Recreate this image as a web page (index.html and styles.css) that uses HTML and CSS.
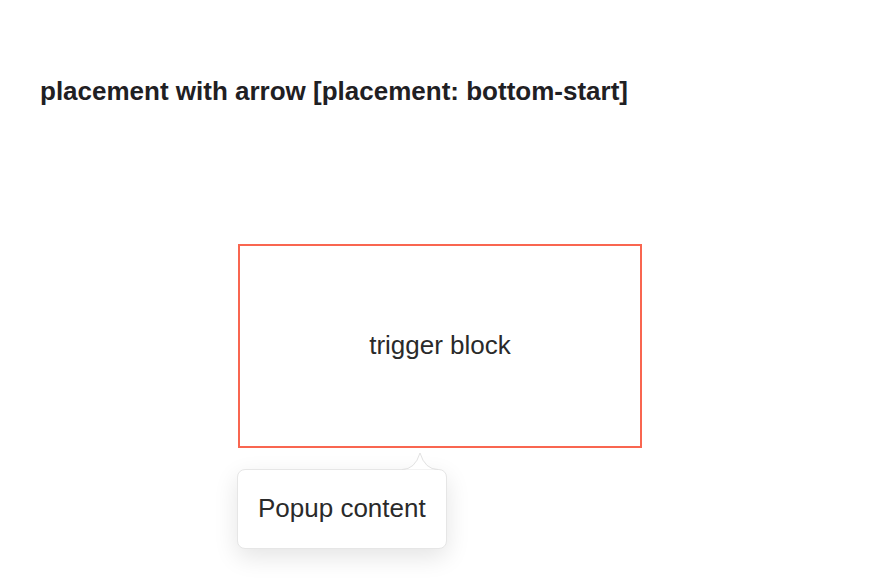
FILE: index.html
```html
<!DOCTYPE html>
<html>
<head>
<meta charset="utf-8">
<link rel="stylesheet" href="styles.css">
</head>
<body>
<div class="page">
  <h2 class="title">placement with arrow [placement: bottom-start]</h2>
  <div class="demo">
    <div class="anchor">
      <div class="trigger">trigger block</div>
      <div class="popup">
        <svg class="arrow" width="36" height="18" viewBox="0 0 36 18">
          <path d="M0 17.5 Q13 17.5 18 1 Q23 17.5 36 17.5 Z" fill="#fff" stroke="none"/>
          <path d="M0 17.5 Q13 17.5 18 1 Q23 17.5 36 17.5" fill="none" stroke="#e2e2e2" stroke-width="1"/>
        </svg>
        <div class="popup-body">Popup content</div>
      </div>
    </div>
  </div>
</div>
</body>
</html>
```
FILE: styles.css
```css
html, body {
  margin: 0;
  padding: 0;
  background: #fff;
}
.page {
  min-height: 586px;
  box-sizing: border-box;
  padding: 76px 40px 0;
  font-family: "Liberation Sans", Arial, sans-serif;
  color: #222;
}
.title {
  margin: 0;
  font-size: 26px;
  line-height: 30px;
  font-weight: bold;
  color: #1f2023;
}
.demo {
  display: flex;
  justify-content: center;
  margin-top: 138px;
}
.anchor {
  display: flex;
  flex-direction: column;
  align-items: flex-start;
}
.trigger {
  width: 400px;
  height: 198px;
  box-sizing: content-box;
  padding: 0 0 2px;
  border: 2px solid #f96650;
  display: flex;
  align-items: center;
  justify-content: center;
  font-size: 26px;
  color: #2a2a2a;
}
.popup {
  position: relative;
  margin-top: 21px;
  margin-left: -1px;
}
.popup-body {
  background: #fff;
  border: 1px solid #e6e6e6;
  border-radius: 8px;
  box-shadow: 0 8px 24px rgba(0, 0, 0, 0.11);
  padding: 20px 20px 22px;
  font-size: 26px;
  line-height: 36px;
  color: #2a2a2a;
  white-space: nowrap;
}
.arrow {
  position: absolute;
  left: 165px;
  top: -17px;
  display: block;
  z-index: 1;
}
```
